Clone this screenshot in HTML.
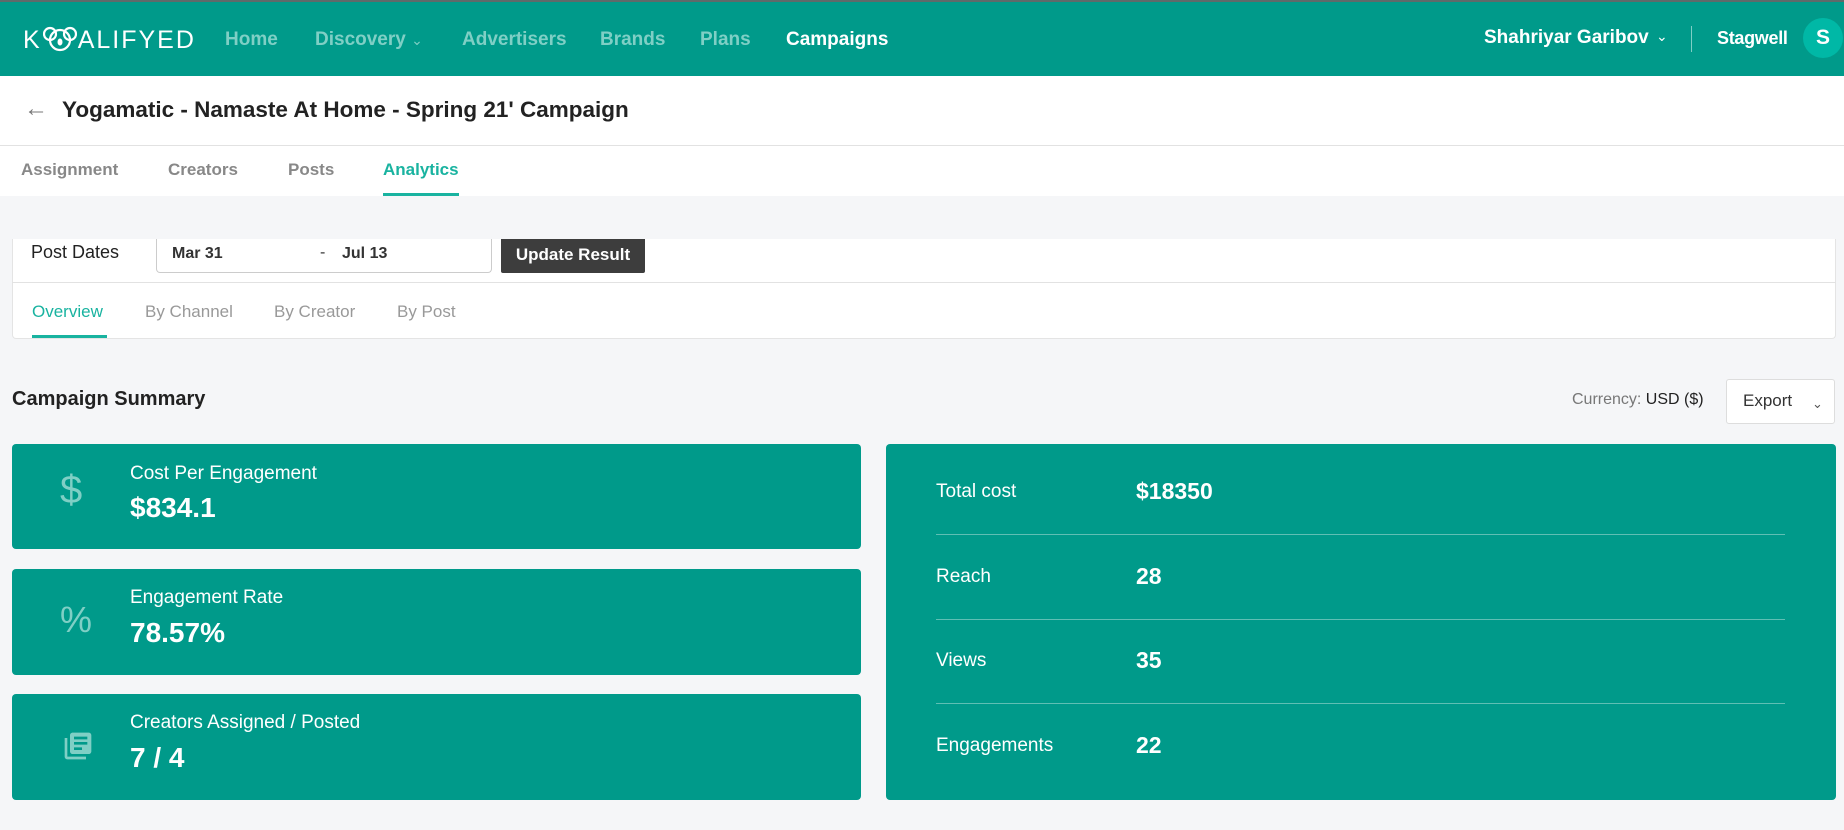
<!DOCTYPE html>
<html><head><meta charset="utf-8"><style>
*{box-sizing:border-box;margin:0;padding:0}
body{width:1844px;height:830px;overflow:hidden;background:#f5f6f8;font-family:"Liberation Sans",sans-serif;position:relative;color:#222}
.a{position:absolute;white-space:nowrap}
.nav{position:absolute;left:0;top:0;width:1844px;height:76px;background:#009a8a;border-top:2px solid #5f6a6a}
.nl{position:absolute;top:27px;font-size:19px;font-weight:bold;color:#7fcfc5}
.card{position:absolute;background:#009a8a;border-radius:4px}
.lbl{position:absolute;left:118px;font-size:19px;color:#fff}
.val{position:absolute;left:118px;font-size:28px;font-weight:bold;color:#fff}
.rl{position:absolute;left:50px;font-size:19px;color:#fff}
.rv{position:absolute;left:250px;font-size:23px;font-weight:bold;color:#fff}
.sep{position:absolute;left:50px;width:849px;height:1px;background:#5fbfb4}
</style></head><body>
<div class="nav">
 <div class="a" style="left:23px;top:24px;font-size:25px;color:#fff;letter-spacing:2px;font-weight:normal">K<svg width="34" height="26" viewBox="0 0 34 26" style="vertical-align:-4px;margin:0 1px"><g fill="none" stroke="#fff" stroke-width="2.2"><circle cx="7" cy="8" r="6"/><circle cx="27" cy="8" r="6"/><ellipse cx="17" cy="14" rx="10" ry="10"/></g><ellipse cx="17" cy="16" rx="2.5" ry="3.5" fill="#fff"/></svg>ALIFYED</div>
 <div class="nl" style="left:225px">Home</div>
 <div class="nl" style="left:315px">Discovery <span style="font-weight:normal;font-size:14px">&#8964;</span></div>
 <div class="nl" style="left:462px">Advertisers</div>
 <div class="nl" style="left:600px">Brands</div>
 <div class="nl" style="left:700px">Plans</div>
 <div class="nl" style="left:786px;color:#fff">Campaigns</div>
 <div class="nl" style="left:1484px;top:25px;color:#fff">Shahriyar Garibov</div>
 <div class="a" style="left:1656px;top:26px;color:#fff;font-size:14px">&#8964;</div>
 <div class="a" style="left:1691px;top:24px;width:1px;height:26px;background:#7fcfc5"></div>
 <div class="nl" style="left:1717px;top:26px;color:#fff;font-size:18px;letter-spacing:-0.3px">Stagwell</div>
 <div class="a" style="left:1803px;top:16px;width:40px;height:40px;border-radius:50%;background:#00b8a6;color:#fff;font-weight:bold;font-size:21px;text-align:center;line-height:40px">S</div>
</div>
<div class="a" style="left:0;top:76px;width:1844px;height:120px;background:#fff"></div>
<div class="a" style="left:24px;top:95px;font-size:24px;color:#777">&#8592;</div>
<div class="a" style="left:62px;top:97px;font-size:22.5px;font-weight:bold;color:#222">Yogamatic - Namaste At Home - Spring 21' Campaign</div>
<div class="a" style="left:0;top:145px;width:1844px;height:1px;background:#e2e2e2"></div>
<div class="a" style="left:21px;top:160px;font-size:17px;font-weight:bold;color:#888">Assignment</div>
<div class="a" style="left:168px;top:160px;font-size:17px;font-weight:bold;color:#888">Creators</div>
<div class="a" style="left:288px;top:160px;font-size:17px;font-weight:bold;color:#888">Posts</div>
<div class="a" style="left:383px;top:160px;font-size:17px;font-weight:bold;color:#19b3a0">Analytics</div>
<div class="a" style="left:383px;top:193px;width:76px;height:3px;background:#19b3a0"></div>

<div class="a" style="left:12px;top:239px;width:1824px;height:100px;background:#fff;border:1px solid #e4e4e4;border-top:none;border-radius:0 0 4px 4px"></div>
<div class="a" style="left:31px;top:242px;font-size:18px;color:#222">Post Dates</div>
<div class="a" style="left:156px;top:239px;width:336px;height:34px;border:1px solid #ccc;border-top:none;border-radius:0 0 4px 4px;background:#fff"></div>
<div class="a" style="left:172px;top:245px;font-size:16px;font-weight:bold;color:#333">Mar 31</div>
<div class="a" style="left:320px;top:244px;font-size:16px;color:#333">-</div>
<div class="a" style="left:342px;top:245px;font-size:16px;font-weight:bold;color:#333">Jul 13</div>
<div class="a" style="left:501px;top:239px;width:144px;height:34px;background:#3d3d3d;border-radius:0 0 2px 2px;color:#fff;font-size:17px;font-weight:bold;text-align:center;line-height:32px">Update Result</div>
<div class="a" style="left:12px;top:282px;width:1824px;height:1px;background:#e2e2e2"></div>
<div class="a" style="left:32px;top:302px;font-size:17px;color:#19b3a0">Overview</div>
<div class="a" style="left:145px;top:302px;font-size:17px;color:#999">By Channel</div>
<div class="a" style="left:274px;top:302px;font-size:17px;color:#999">By Creator</div>
<div class="a" style="left:397px;top:302px;font-size:17px;color:#999">By Post</div>
<div class="a" style="left:32px;top:335px;width:75px;height:3px;background:#19b3a0"></div>

<div class="a" style="left:12px;top:388px;font-size:20px;font-weight:bold;color:#222">Campaign Summary</div>
<div class="a" style="left:1572px;top:391px;font-size:16px;color:#777">Currency: <span style="color:#222">USD ($)</span></div>
<div class="a" style="left:1726px;top:379px;width:109px;height:45px;background:#fff;border:1px solid #ddd;border-radius:3px"></div>
<div class="a" style="left:1743px;top:391px;font-size:17px;color:#333">Export</div>
<div class="a" style="left:1812px;top:396px;font-size:13px;color:#555">&#8964;</div>

<div class="card" style="left:12px;top:444px;width:849px;height:105px">
 <div class="a" style="left:48px;top:24px;font-size:40px;color:#7fcfc5">$</div>
 <div class="lbl" style="top:19px">Cost Per Engagement</div>
 <div class="val" style="top:48px">$834.1</div>
</div>
<div class="card" style="left:12px;top:569px;width:849px;height:106px">
 <div class="a" style="left:48px;top:30px;font-size:36px;color:#7fcfc5">%</div>
 <div class="lbl" style="top:18px">Engagement Rate</div>
 <div class="val" style="top:48px">78.57%</div>
</div>
<div class="card" style="left:12px;top:694px;width:849px;height:106px">
 <svg class="a" style="left:50px;top:36px" width="32" height="32" viewBox="0 0 24 24"><path fill="#7fcfc5" d="M4 6H2v14c0 1.1.9 2 2 2h14v-2H4V6zm16-4H8c-1.1 0-2 .9-2 2v12c0 1.1.9 2 2 2h12c1.1 0 2-.9 2-2V4c0-1.1-.9-2-2-2zm-1 9H9V9h10v2zm-4 4H9v-2h6v2zm4-8H9V5h10v2z"/></svg>
 <div class="lbl" style="top:18px">Creators Assigned / Posted</div>
 <div class="val" style="top:48px">7 / 4</div>
</div>

<div class="card" style="left:886px;top:444px;width:950px;height:356px">
 <div class="rl" style="top:37px">Total cost</div><div class="rv" style="top:34px">$18350</div>
 <div class="sep" style="top:90px"></div>
 <div class="rl" style="top:122px">Reach</div><div class="rv" style="top:119px">28</div>
 <div class="sep" style="top:175px"></div>
 <div class="rl" style="top:206px">Views</div><div class="rv" style="top:203px">35</div>
 <div class="sep" style="top:259px"></div>
 <div class="rl" style="top:291px">Engagements</div><div class="rv" style="top:288px">22</div>
</div>
</body></html>
